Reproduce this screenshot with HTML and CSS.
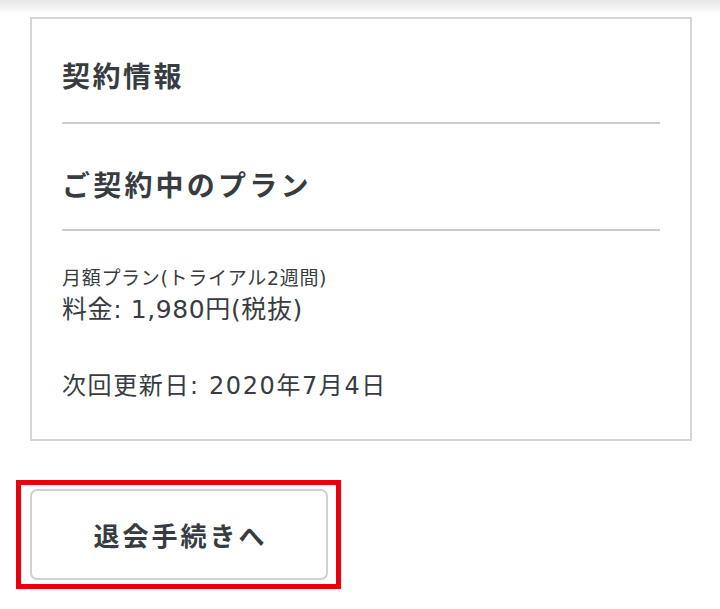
FILE: index.html
```html
<!DOCTYPE html>
<html lang="ja">
<head>
  <meta charset="UTF-8">
  <meta name="viewport" content="width=device-width, initial-scale=1.0">
  <title>契約情報</title>
  <link rel="stylesheet" href="styles.css">
</head>
<body>
  <div class="top-shadow"></div>

  <section class="card">
    <div class="card-block">
      <h2 class="card-title">契約情報</h2>
    </div>
    <div class="card-block">
      <h3 class="plan-title">ご契約中のプラン</h3>
    </div>
    <div class="card-body">
      <p class="plan-name">月額プラン(トライアル2週間)</p>
      <p class="plan-price">料金: 1,980円(税抜)</p>
      <p class="plan-renewal">次回更新日: 2020年7月4日</p>
    </div>
  </section>

  <div class="highlight">
    <button class="cancel-button">退会手続きへ</button>
  </div>
</body>
</html>
```

FILE: styles.css
```css
body {
  margin: 0;
  padding: 0;
  background-color: #fff;
  color: #383c41;
  font-family: "Noto Sans CJK JP", "Noto Sans", sans-serif;
}

p, h2, h3 {
  margin: 0;
}

.top-shadow {
  height: 14px;
  background: linear-gradient(#e6e6e6, #fff);
  margin-bottom: 3px;
}

.card {
  margin: 0 28px 0 30px;
  border: 2px solid #d3d7da; /* light gray frame */
  background-color: #fff;
  padding: 0 30px;
}

.card-block {
  border-bottom: 2px solid #c9cdd1;
}

.card-title {
  padding: 36px 0 27px;
  font-size: 28px;
  line-height: 40px;
  font-weight: 700;
  letter-spacing: 2.5px;
}

.plan-title {
  padding: 40px 0 25px;
  font-size: 28px;
  line-height: 40px;
  font-weight: 700;
  letter-spacing: 3.2px;
}

.card-body {
  padding: 33px 0 37px;
  font-family: "DejaVu Sans", "Noto Sans CJK JP", sans-serif;
}

.plan-name {
  font-size: 19px;
  line-height: 28px;
  letter-spacing: 0.7px;
}

.plan-price {
  margin-top: 2px;
  font-size: 25px;
  line-height: 32px;
  letter-spacing: 0.6px;
}

.plan-renewal {
  margin-top: 44px;
  font-size: 24px;
  line-height: 32px;
  letter-spacing: 1.6px;
}

/* red annotation box round the button */
.highlight {
  display: inline-block;
  margin: 39px 0 0 16px;
  padding: 4px 8px 4px 9px;
  border: 5px solid #e8000b;
}

.cancel-button {
  display: block;
  width: 298px;
  height: 91px;
  border: 2px solid #cdd1d5;
  border-radius: 7px;
  background-color: #fff;
  color: #383c41;
  font-family: "Noto Sans CJK JP", "Noto Sans", sans-serif;
  font-size: 26px;
  font-weight: 700;
  letter-spacing: 3px;
  padding: 0 0 0 3px;
  cursor: pointer;
}
```
